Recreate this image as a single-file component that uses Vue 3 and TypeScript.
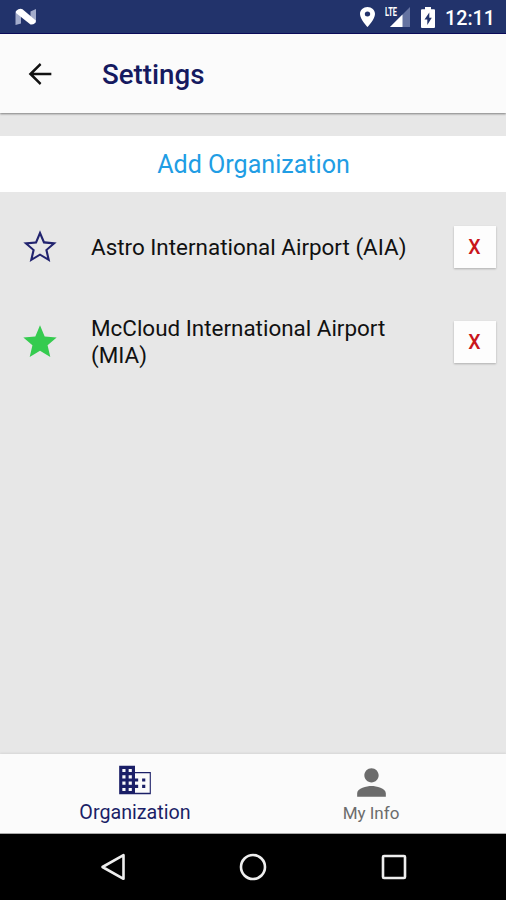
<script setup lang="ts">
interface Organization {
  name: string
  favorite: boolean
}

const organizations: Organization[] = [
  { name: 'Astro International Airport (AIA)', favorite: false },
  { name: 'McCloud International Airport (MIA)', favorite: true },
]
</script>

<template>
  <div class="screen">
    <div class="status">
      <svg class="nougat" width="22" height="18" viewBox="0 0 22 18">
        <path d="M.5 3.500 6 1v14.500L.5 17zM15.500 3.500 21 1v13.500L15.500 16z" fill="#a3accb" />
        <path d="M1 3Q4.500 -.3 7.500 1.200L20.800 12.500Q20.500 17 15.500 16.500L1 5z" fill="#fff" />
      </svg>
      <div class="indicators">
        <svg class="pin" width="15" height="20" viewBox="5 2 14 20" preserveAspectRatio="none">
          <path fill="#fff" d="M12 2C8.130 2 5 5.130 5 9c0 5.250 7 13 7 13s7-7.750 7-13c0-3.870-3.130-7-7-7zm0 9.500a2.500 2.500 0 1 1 0-5 2.500 2.500 0 0 1 0 5z" />
        </svg>
        <div class="signal">
          <span class="lte">LTE</span>
          <svg width="21" height="20" viewBox="0 0 21 20">
            <path d="M21 0V20H1z" fill="#6573a1" />
            <path d="M13.500 7.500V20H1z" fill="#fff" />
          </svg>
        </div>
        <svg class="battery" width="14" height="21" viewBox="0 0 14 21">
          <path fill="#fff" d="M4 0h6v2.200H13q1 0 1 1V20q0 1-1 1H1q-1 0-1-1V3.200q0-1 1-1h3z" />
          <path fill="#22336b" d="M8.300 5.500 3.500 12.500H6.300V18L10.800 10.800H8.300z" />
        </svg>
        <span class="clock">12:11</span>
      </div>
    </div>

    <header class="bar">
      <svg class="back" width="34" height="34" viewBox="0 0 24 24">
        <path fill="#111" d="M20 11.100H7.500l5.500-5.500L11.900 4.300 4 12l7.900 7.700 1.100-1.300-5.500-5.500H20z" />
      </svg>
      <h1>Settings</h1>
    </header>

    <main>
      <button class="add"><span>Add Organization</span></button>
      <ul>
        <li v-for="org in organizations" :key="org.name">
          <svg class="star" width="40" height="40" viewBox="0 0 24 24">
            <path
              v-if="org.favorite"
              fill="#35cb4f"
              d="M12 17.270 18.180 21l-1.640-7.030L22 9.240l-7.190-.610L12 2 9.190 8.630 2 9.240l5.460 4.730L5.820 21z"
            />
            <path
              v-else
              fill="#22246f"
              d="M22 9.240l-7.190-.620L12 2 9.190 8.630 2 9.240l5.460 4.730L5.820 21 12 17.270 18.180 21l-1.630-7.030L22 9.240zM12 15.900l-4.270 2.580 1.130-4.870-3.780-3.270 4.980-.430L12 5.320l1.950 4.600 4.980.430-3.780 3.270 1.130 4.870z"
            />
          </svg>
          <span class="name">{{ org.name }}</span>
          <button class="remove">X</button>
        </li>
      </ul>
    </main>

    <nav class="tabs">
      <div class="tab active">
        <svg width="38" height="38" viewBox="0 0 24 24">
          <path fill="currentColor" d="M12 7V3H2v18h20V7H12zM6 19H4v-2h2v2zm0-4H4v-2h2v2zm0-4H4V9h2v2zm0-4H4V5h2v2zm4 12H8v-2h2v2zm0-4H8v-2h2v2zm0-4H8V9h2v2zm0-4H8V5h2v2zm11.300 13H12v-3h2v-2h-2v-2h2v-2h-2V7.800h9.300v12.200zM18.500 11h-2v2h2v-2zm0 4h-2v2h2v-2z" />
        </svg>
        <span>Organization</span>
      </div>
      <div class="tab info">
        <svg width="43" height="43" viewBox="0 0 24 24">
          <path fill="currentColor" d="M12 12c2.210 0 4-1.790 4-4s-1.790-4-4-4-4 1.790-4 4 1.790 4 4 4zm0 2c-2.670 0-8 1.340-8 4v2h16v-2c0-2.660-5.330-4-8-4z" />
        </svg>
        <span>My Info</span>
      </div>
    </nav>

    <div class="system">
      <svg width="28" height="30" viewBox="0 0 28 30">
        <path d="M24.500 3.200V26.800L3.500 15z" />
      </svg>
      <svg width="30" height="30" viewBox="0 0 30 30">
        <circle cx="15" cy="15" r="12" />
      </svg>
      <svg width="30" height="30" viewBox="0 0 30 30">
        <rect x="4" y="4" width="22" height="22" rx="1" />
      </svg>
    </div>
  </div>
</template>

<style>
body {
  margin: 0;
}
</style>

<style scoped>
.screen {
  width: 506px;
  height: 900px;
  display: flex;
  flex-direction: column;
  overflow: hidden;
  background: #e7e7e7;
  font-family: Roboto, sans-serif;
}
.status {
  flex: none;
  box-sizing: border-box;
  height: 34px;
  padding: 1px 11px 0 15px;
  display: flex;
  align-items: center;
  justify-content: space-between;
  background: #22336b;
  border-bottom: 1px solid #0c0c5c;
}
.indicators {
  display: flex;
  align-items: center;
}
.clock {
  margin: 2px 0 0 10px;
  color: #fff;
  font-size: 19.700px;
  font-weight: 500;
}
.signal {
  position: relative;
  width: 27px;
  height: 20px;
  margin-left: 8px;
  display: flex;
  justify-content: flex-end;
}
.lte {
  position: absolute;
  left: 2px;
  top: 0;
  padding-right: 1px;
  background: #22336b;
  color: #fff;
  font-size: 12px;
  font-weight: 700;
  line-height: 11px;
  transform: scaleX(0.62);
  transform-origin: left;
}
.battery {
  margin-left: 11px;
}
.bar {
  flex: none;
  position: relative;
  height: 79px;
  display: flex;
  align-items: center;
  padding-left: 23px;
  background: #fbfbfb;
  box-shadow: 0 1px 2px rgba(0, 0, 0, 0.45);
}
h1 {
  margin: 1px 0 0 45px;
  color: #151a60;
  font-size: 27.700px;
  font-weight: 500;
}
main {
  flex: 1;
  padding-top: 23px;
}
button {
  border: 0;
  padding: 0;
  font-family: inherit;
}
.add {
  display: block;
  width: 100%;
  height: 56px;
  padding: 1px 0 0 1px;
  background: #fff;
  color: #219de4;
  font-size: 25.100px;
}
ul {
  margin: 0;
  padding: 7px 0 0;
  list-style: none;
}
li {
  height: 95px;
  display: flex;
  align-items: center;
  padding: 0 10px 0 20px;
}
.name {
  width: 330px;
  margin-left: 31px;
  padding-top: 1px;
  color: #111;
  font-size: 22.430px;
  line-height: 27px;
}
.remove {
  width: 42px;
  height: 42px;
  margin-left: auto;
  padding: 2px 1px 0 0;
  background: #fdfdfd;
  color: #c9151b;
  font-size: 19.500px;
  font-weight: 500;
  box-shadow: 0 1px 2px rgba(0, 0, 0, 0.25);
}
.tabs {
  flex: none;
  box-sizing: border-box;
  height: 80px;
  display: flex;
  justify-content: center;
  background: #fbfbfb;
  border-bottom: 1px solid #aaa;
  box-shadow: 0 -1px 2px rgba(0, 0, 0, 0.08);
}
.tab {
  width: 236px;
  display: flex;
  flex-direction: column;
  align-items: center;
  padding-top: 7px;
  color: #1b1f67;
  font-size: 19.700px;
  line-height: 24px;
}
.tab span {
  margin-top: 2px;
}
.info {
  color: #6c6c6c;
  font-size: 17px;
}
.info span {
  margin-top: -3px;
}
.system {
  flex: none;
  height: 66px;
  padding-left: 1px;
  display: flex;
  align-items: center;
  justify-content: center;
  gap: 111px;
  background: #000;
}
.system svg {
  fill: none;
  stroke: #eee;
  stroke-width: 2.600;
  stroke-linejoin: round;
}
</style>
